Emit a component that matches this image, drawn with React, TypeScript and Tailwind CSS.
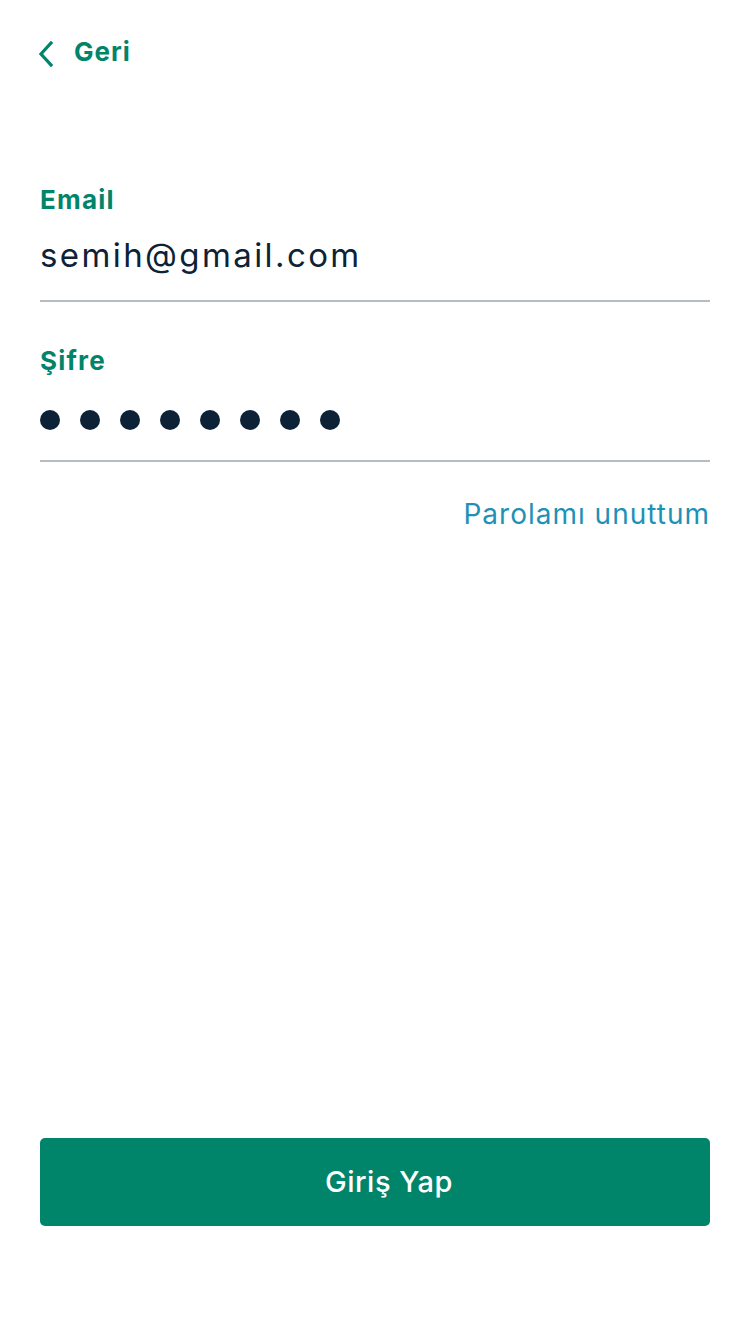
import React from 'react';

const App: React.FC = () => {
  return (
    <div
      className="w-[750px] h-[1334px] bg-white flex flex-col px-10"
      style={{ fontFamily: 'Inter, "Open Sans", sans-serif' }}
    >
      <div className="flex items-center gap-[20px] pt-[34px] h-[70px]">
        <svg width="16" height="26" viewBox="0 0 16 26" className="-ml-[2px] mt-[4px]">
          <path d="M13 2 L3 13 L13 24" fill="none" stroke="#00846a" strokeWidth="3.2" strokeLinecap="square" />
        </svg>
        <span className="text-[26px] font-bold text-[#00846a] leading-none tracking-[1px]">Geri</span>
      </div>

      <div className="mt-[117px] flex flex-col">
        <label className="text-[26px] font-bold text-[#00846a] leading-none tracking-[1.2px]">Email</label>
        <div className="mt-[26px] text-[33px] text-[#0d2137] leading-none tracking-[2.4px]">semih@gmail.com</div>
        <div className="mt-[28px] h-[2px] bg-[#b7bcc2]" />
      </div>

      <div className="mt-[46px] flex flex-col">
        <label className="text-[26px] font-bold text-[#00846a] leading-none tracking-[1.2px]">Şifre</label>
        <div className="mt-[36px] flex gap-[20px]">
          {Array.from({ length: 8 }).map((_, i) => (
            <span key={i} className="w-[20px] h-[20px] rounded-full bg-[#0d2137]" />
          ))}
        </div>
        <div className="mt-[30px] h-[2px] bg-[#b7bcc2]" />
      </div>

      <div className="mt-[38px] flex justify-end">
        <span className="text-[28px] text-[#1e91b6] leading-none tracking-[1px]">Parolamı unuttum</span>
      </div>

      <div className="flex-1" />

      <button className="h-[88px] mb-[108px] pl-[28px] rounded-[5px] bg-[#00846a] text-white text-[29px] font-medium tracking-[0.5px]">
        Giriş Yap
      </button>
    </div>
  );
};

export default App;
